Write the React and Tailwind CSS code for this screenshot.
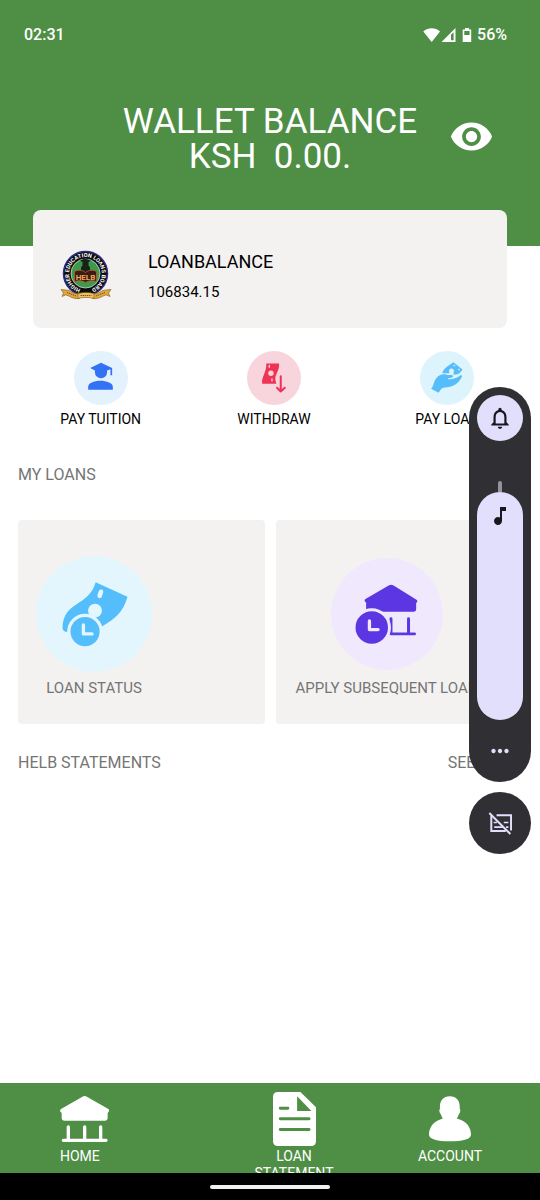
import React from 'react';
import { MdMoreHoriz, MdMusicNote, MdNotificationsNone, MdVisibility } from 'react-icons/md';

const StatusIcons = () => (
  <svg viewBox="0 0 50 16" className="h-4 w-[50px]" fill="#fff" aria-hidden="true">
    <path d="M0.3 4.4C5 .2 12.400 .2 17 4.400L8.700 15z" />
    <path fillRule="evenodd" d="M18.500 15L32.500 1v14zM28 7.800v5.400h2.600V5.200z" />
    <path fillRule="evenodd" d="M42 1h4v1.500h2.200v12.500h-8.500V2.500H42zM41.300 4v4h5.300V4z" />
  </svg>
);

const HelbLogo = () => (
  <svg viewBox="0 0 52 54" className="h-[54px] w-[52px]" role="img" aria-label="HELB logo">
    <defs>
      <path id="ring" d="M21.500 42.400A16.400 16.400 0 1 1 29.500 42.400" />
    </defs>
    <circle cx="25.500" cy="26.500" r="22" fill="#0b0b0f" stroke="#2f2c86" strokeWidth="1.500" />
    <circle cx="25.500" cy="26.500" r="14.500" fill="#3d9a4a" stroke="#e8e8e8" strokeWidth=".7" />
    <text fontSize="5.600" fontWeight="700" fill="#fff" fontFamily="Roboto, sans-serif">
      <textPath href="#ring" startOffset="1">HIGHER EDUCATION LOANS BOARD</textPath>
    </text>
    <path d="M20 13.500l5-2 6 2-2.500 1.500v3.500l1.500 2v3l-3 2h-3l-3-2v-3l1.500-2V15z" fill="#17221a" />
    <path d="M14.500 24.500c4-2 8-1.500 11 1 3-2.500 7-3 11-1v10c-4-1.500-8-1-11 1-3-2-7-2.500-11-1z" fill="#3a1c14" stroke="#c65a2c" strokeWidth=".8" />
    <text x="25.500" y="33" textAnchor="middle" fontSize="8" fontWeight="700" fill="#f2a65a" fontFamily="Roboto, sans-serif">HELB</text>
    <path d="M1 42.500l5 .5c5 0 6 4 12 3.500l1.500 5C12 52.500 9 48 5.500 48L2 49.500l1.500-3.500z" fill="#e0a83c" stroke="#7b5518" strokeWidth=".6" />
    <path d="M51 42.500l-5 .5c-5 0-6 4-12 3.500l-1.500 5C40 52.500 43 48 46.500 48l3.500 1.500-1.500-3.500z" fill="#e0a83c" stroke="#7b5518" strokeWidth=".6" />
    <path d="M18 46.500c5-1.500 11-1.500 16 0v5c-5-1.500-11-1.500-16 0z" fill="#efc062" stroke="#7b5518" strokeWidth=".6" />
    <path d="M7 45.500l9 3.500M20.500 48.500h11M36 49l9-3.500" stroke="#7b5518" strokeWidth="1" strokeDasharray="1.500 .6" fill="none" />
  </svg>
);

const TuitionIcon = () => (
  <svg viewBox="0 0 160 160" className="h-full w-full" fill="#3371f5" aria-hidden="true">
    <path d="M80 35l33 15v22h-5V54l-10 4v5a18 18 0 0 1-36 0v-5l-14-8z" />
    <path d="M42 115v-9c0-11 17-18 36-18s37 7 37 18v9z" />
  </svg>
);

const WithdrawIcon = () => (
  <svg viewBox="0 0 160 160" className="h-full w-full" aria-hidden="true">
    <path d="M57 37h38c2 22-13 32-11 48l3 12H45c-3-22 14-34 12-60z" fill="#ee3355" />
    <circle cx="71" cy="66" r="8" fill="#f8d5dd" />
    <path d="M66 43v5M74 83v5" stroke="#f8d5dd" strokeWidth="4" strokeLinecap="round" />
    <path d="M93 72h13v27l12 5-15 21-16-16 6-8z" fill="#f8d5dd" />
    <path d="M100 75v45M89 109l11 11 12-11" stroke="#ee3355" strokeWidth="6" strokeLinecap="round" strokeLinejoin="round" fill="none" />
  </svg>
);

const PayLoanIcon = () => (
  <svg viewBox="0 0 160 160" className="h-full w-full" fill="#55befa" aria-hidden="true">
    <path d="M66 66C70 48 88 42 99 33l27 22c-4 6-8 12-15 14l-12 1 1-9c3-8-10-13-14-4l1 9H73z" />
    <path d="M100 42l3 2M114 54l3 2" stroke="#def4fd" strokeWidth="3" strokeLinecap="round" />
    <path d="M33 112c7-7 7-18 12-27 6-10 14-15 24-16 8-1 14 3 22 2 4 0 7 1 7 4s-4 5-15 6l1 3c15-1 22-3 34-11 5-3 8 0 6 4-6 11-15 21-26 26-12 6-24 3-34 8l-9 13z" />
  </svg>
);

const LoanStatusIcon = () => (
  <svg viewBox="79 138 350 350" className="h-full w-full" aria-hidden="true">
    <path d="M259 217l96 44c-13 48-37 65-77 90l-104 16c-8 0-15-4-15-12 2-83 79-63 100-138z" fill="#53befb" />
    <circle cx="257" cy="303" r="21" fill="#e4f6fd" />
    <path d="M271 258l4-12" stroke="#e4f6fd" strokeWidth="14" strokeLinecap="round" />
    <circle cx="227" cy="366" r="54" fill="#e4f6fd" />
    <circle cx="227" cy="366" r="44" fill="#53befb" />
    <path d="M222 346v27h26" stroke="#e4f6fd" strokeWidth="10" strokeLinecap="round" strokeLinejoin="round" fill="none" />
  </svg>
);

const ApplyLoanIcon = () => (
  <svg viewBox="184 144 338 338" className="h-full w-full" aria-hidden="true">
    <path d="M365 225q4 0 8 2l69 43q4 3 2 7l-3 3v18q0 8-8 8H290v-28l-4-3q-2-4 2-7l70-41q4-2 7-2z" fill="#5b36e2" />
    <path d="M365 327v44M418 327v44M365 373h71" stroke="#5b36e2" strokeWidth="9" strokeLinecap="round" />
    <circle cx="307" cy="354" r="58" fill="#f0e8fd" />
    <circle cx="307" cy="354" r="49" fill="#5b36e2" />
    <path d="M300 334v26h26" stroke="#f0e8fd" strokeWidth="10" strokeLinecap="round" strokeLinejoin="round" fill="none" />
  </svg>
);

const HomeIcon = () => (
  <svg viewBox="94 62 147 138" className="h-[46px] w-[49px]" fill="#fff" aria-hidden="true">
    <path d="M168 62q4 0 8 3l63 36q4 4 1 8l-3 4v14q0 9-9 9h-120q-9 0-9-9v-14l-4-4q-2-5 2-8l63-36q4-3 8-3z" />
    <path d="M119 155v38M168 155v38M216 155v38M104 195h128" stroke="#fff" strokeWidth="10" strokeLinecap="round" />
  </svg>
);

const StatementIcon = () => (
  <svg viewBox="99 50 130 163" className="h-[54px] w-[43px]" aria-hidden="true">
    <path d="M114 50h68l47 46v102q0 15-15 15H114q-15 0-15-15V65q0-15 15-15z" fill="#fff" />
    <path d="M172 63v44h43z" fill="#4f8e45" />
    <path d="M121 99h23M121 131h87M121 163h87" stroke="#4f8e45" strokeWidth="9" strokeLinecap="round" />
  </svg>
);

const AccountIcon = () => (
  <svg viewBox="569 63 127 137" className="h-[46px] w-[42px]" fill="#fff" aria-hidden="true">
    <path d="M632 63c20 0 30 13 30 32v6c3 2 2 10-2 15-2 6-4 10-7 14l9 3c20 6 34 24 34 45 0 15-28 21-64 21s-63-6-63-21c0-21 14-39 34-45l8-3c-3-4-5-8-7-14-4-5-5-13-2-15v-6c0-19 10-32 30-32z" />
  </svg>
);

const CaptionsOffIcon = () => (
  <svg viewBox="140 362 76 76" className="h-[25px] w-[25px]" stroke="#e2dffc" strokeWidth="6" fill="none" aria-hidden="true">
    <path d="M150 376v47h44M166 375h44v46" />
    <path d="M157 397h10M159 411h26M188 397h14M195 411h7" strokeWidth="5" />
    <path d="M144 368l64 64" />
  </svg>
);

const actions = [
  { label: 'PAY TUITION', icon: TuitionIcon, bg: 'bg-[#e4f2fd]' },
  { label: 'WITHDRAW', icon: WithdrawIcon, bg: 'bg-[#f8d5dd]' },
  { label: 'PAY LOAN', icon: PayLoanIcon, bg: 'bg-[#def4fd]' },
];

const loans = [
  { label: 'LOAN STATUS', icon: LoanStatusIcon, circle: 'size-[116px] bg-[#e4f6fd]', place: 'pl-[18px]' },
  { label: 'APPLY SUBSEQUENT LOAN', icon: ApplyLoanIcon, circle: 'size-[112px] bg-[#f0e8fd]', place: 'pl-5' },
];

const tabs = [
  { label: 'HOME', icon: HomeIcon, place: 'justify-self-start pl-[60px]', text: 'self-start' },
  { label: 'LOAN STATEMENT', icon: StatementIcon, place: 'justify-self-center', text: 'w-[84px]' },
  { label: 'ACCOUNT', icon: AccountIcon, place: 'justify-self-center', text: '' },
];

const VolumePanel = () => (
  <aside className="absolute right-[9px] top-[387px] flex w-[62px] flex-col gap-[10px]">
    <div className="flex flex-col items-center rounded-full bg-[#303034] pt-2 pb-[18px]">
      <button aria-label="Ring mode" className="flex size-[46px] items-center justify-center rounded-full bg-[#e2dffc] text-[#17171c]">
        <MdNotificationsNone className="size-[26px]" />
      </button>
      <div className="mt-10 h-[11px] w-1 rounded-t-full bg-[#94929f]" />
      <label className="relative flex h-[228px] w-[46px] justify-center rounded-full bg-[#e2dffc] pt-3 text-[#17171c]">
        <MdMusicNote className="size-6" />
        <input type="range" aria-label="Media volume" defaultValue="95" className="absolute inset-0 h-full w-full opacity-0" />
      </label>
      <button aria-label="More sound settings" className="mt-[18px] text-[#e2dffc]">
        <MdMoreHoriz className="size-[26px]" />
      </button>
    </div>
    <button aria-label="Live caption" className="flex size-[62px] items-center justify-center rounded-full bg-[#303034]">
      <CaptionsOffIcon />
    </button>
  </aside>
);

export default function App() {
  return (
    <div className="relative flex min-h-screen flex-col overflow-x-hidden bg-white font-['Roboto',sans-serif] text-black">
      <header className="bg-[#4f8e45] pb-[72px] text-white">
        <div className="flex items-center justify-between pt-[25px] pr-[33px] pl-6 text-base leading-5 font-medium">
          <span>02:31</span>
          <span className="flex items-center gap-1">
            <StatusIcons />
            56%
          </span>
        </div>
        <div className="mt-[59px] grid grid-cols-[1fr_auto_1fr]">
          <h1 className="col-start-2 text-center text-[35px] leading-[35px] whitespace-pre">
            WALLET BALANCE
            <br />
            {'KSH  0.00.'}
          </h1>
          <button aria-label="Show balance" className="mr-[46px] self-start justify-self-end pt-[10px]">
            <MdVisibility className="size-[45px]" />
          </button>
        </div>
      </header>

      <main className="flex-1">
        <section className="mx-[33px] -mt-9 flex items-start rounded-lg bg-[#f4f2f1] pt-[37px] pb-[21px] pl-[27px]">
          <HelbLogo />
          <div className="ml-9">
            <h2 className="text-lg leading-[30px]">LOANBALANCE</h2>
            <p className="text-[15px] leading-[30px]">106834.15</p>
          </div>
        </section>

        <div className="mt-[23px] grid grid-cols-3 pr-[6px] pl-[14px]">
          {actions.map(({ label, icon: Icon, bg }) => (
            <button key={label} className="flex flex-col items-center gap-1 text-sm leading-5">
              <span className={`size-[54px] rounded-full ${bg}`}>
                <Icon />
              </span>
              {label}
            </button>
          ))}
        </div>

        <h2 className="mt-9 px-[18px] text-base leading-5 text-[#757575]">MY LOANS</h2>

        <div className="mt-[35px] grid grid-cols-2 gap-[11px] px-[18px]">
          {loans.map(({ label, icon: Icon, circle, place }) => (
            <button key={label} className={`flex rounded bg-[#f4f2f1] pt-9 pb-[26px] text-[15px] leading-5 text-[#757575] ${place}`}>
              <span className="flex flex-col items-center gap-[6px]">
                <span className="flex h-[116px] items-center">
                  <span className={`rounded-full ${circle}`}>
                    <Icon />
                  </span>
                </span>
                {label}
              </span>
            </button>
          ))}
        </div>

        <div className="mt-[29px] flex justify-between pr-[33px] pl-[18px] text-base leading-5 text-[#757575]">
          <h2>HELB STATEMENTS</h2>
          <a href="#statements">SEE ALL</a>
        </div>
      </main>

      <nav className="grid h-[90px] grid-cols-[38fr_22fr_30fr] overflow-hidden bg-[#4f8e45] pt-[9px] text-sm leading-[17px] text-white">
        {tabs.map(({ label, icon: Icon, place, text }) => (
          <a key={label} href="#" className={`flex flex-col items-center gap-0.5 text-center ${place}`}>
            <span className="flex h-[54px] shrink-0 items-center">
              <Icon />
            </span>
            <span className={text}>{label}</span>
          </a>
        ))}
      </nav>
      <div className="flex h-[27px] items-center justify-center bg-black">
        <div className="h-1 w-[120px] rounded-full bg-[#f0f0f0]" />
      </div>

      <VolumePanel />
    </div>
  );
}
